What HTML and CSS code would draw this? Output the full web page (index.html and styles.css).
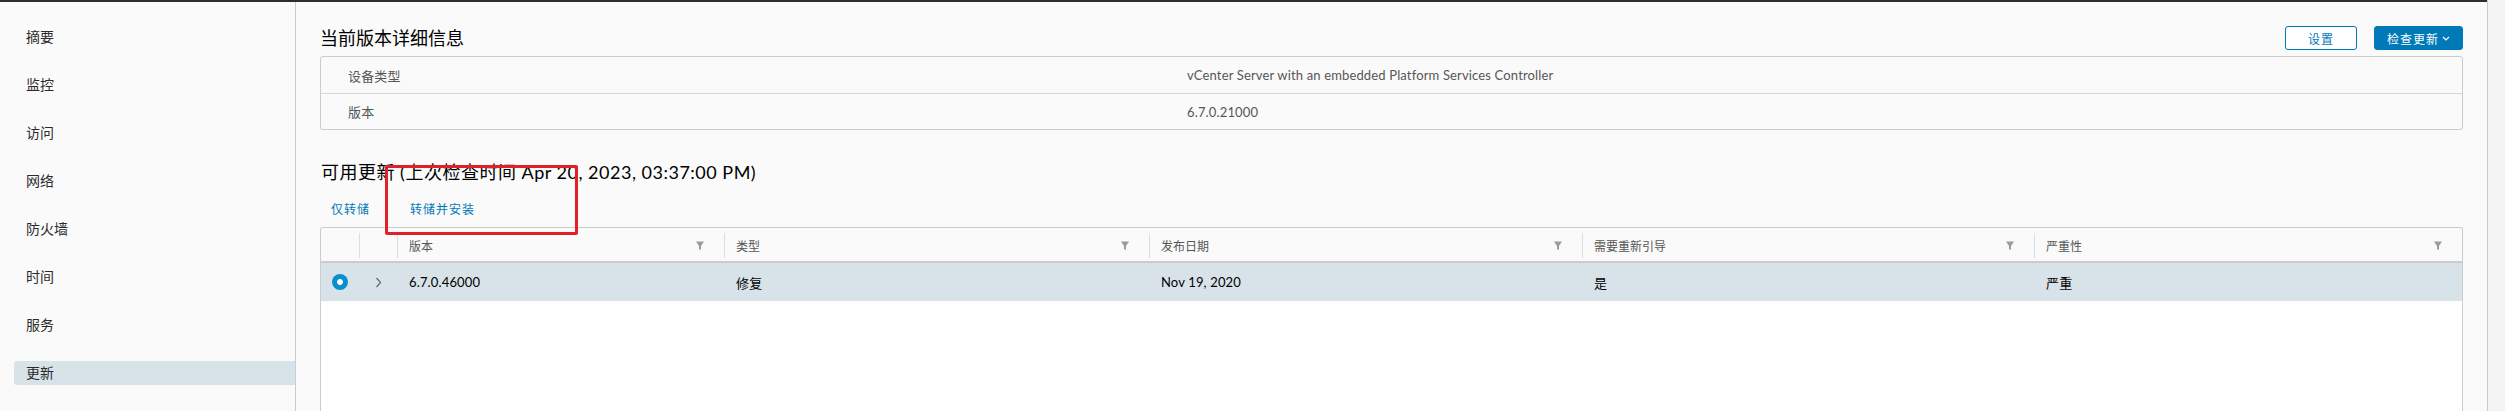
FILE: index.html
```html
<!DOCTYPE html>
<html lang="zh-CN">
<head>
<meta charset="utf-8">
<title>更新</title>
<link rel="stylesheet" href="styles.css">
</head>
<body>
<div class="app">
  <div class="workspace">
    <div class="topbar"></div>
    <div class="layout">
      <nav class="sidebar">
        <div class="nav-item">摘要</div>
        <div class="nav-item">监控</div>
        <div class="nav-item">访问</div>
        <div class="nav-item">网络</div>
        <div class="nav-item">防火墙</div>
        <div class="nav-item">时间</div>
        <div class="nav-item">服务</div>
        <div class="nav-item active">更新</div>
      </nav>
      <main class="main">
        <div class="section-head">
          <h2 class="title">当前版本详细信息</h2>
          <div class="actions">
            <button class="btn btn-outline">设置</button>
            <button class="btn btn-primary">检查更新<svg class="caret" width="8" height="5" viewBox="0 0 8 5"><polyline points="1,1 4,4 7,1" fill="none" stroke="#fff" stroke-width="1.2"/></svg></button>
          </div>
        </div>
        <div class="info-box">
          <div class="info-row">
            <div class="info-label">设备类型</div>
            <div class="info-value">vCenter Server with an embedded Platform Services Controller</div>
          </div>
          <div class="info-row">
            <div class="info-label">版本</div>
            <div class="info-value">6.7.0.21000</div>
          </div>
        </div>
        <h2 class="title title-updates">可用更新 (上次检查时间 Apr 20, 2023, 03:37:00 PM)</h2>
        <div class="link-bar">
          <a class="link">仅转储</a>
          <a class="link">转储并安装</a>
        </div>
        <div class="grid">
          <div class="grid-head">
            <div class="gh-cell"></div>
            <div class="gh-cell"><div class="gh-inner"></div></div>
            <div class="gh-cell"><div class="gh-inner"><span>版本</span><svg class="filter" width="8" height="9" viewBox="0 0 8 9"><path d="M0 0.5H8L5 5V9L3 8V5Z" fill="#9b9b9b"/></svg></div></div>
            <div class="gh-cell"><div class="gh-inner"><span>类型</span><svg class="filter" width="8" height="9" viewBox="0 0 8 9"><path d="M0 0.5H8L5 5V9L3 8V5Z" fill="#9b9b9b"/></svg></div></div>
            <div class="gh-cell"><div class="gh-inner"><span>发布日期</span><svg class="filter" width="8" height="9" viewBox="0 0 8 9"><path d="M0 0.5H8L5 5V9L3 8V5Z" fill="#9b9b9b"/></svg></div></div>
            <div class="gh-cell"><div class="gh-inner"><span>需要重新引导</span><svg class="filter" width="8" height="9" viewBox="0 0 8 9"><path d="M0 0.5H8L5 5V9L3 8V5Z" fill="#9b9b9b"/></svg></div></div>
            <div class="gh-cell"><div class="gh-inner"><span>严重性</span><svg class="filter" width="8" height="9" viewBox="0 0 8 9"><path d="M0 0.5H8L5 5V9L3 8V5Z" fill="#9b9b9b"/></svg></div></div>
          </div>
          <div class="grid-row selected">
            <div class="gr-cell center"><span class="radio"></span></div>
            <div class="gr-cell center"><svg width="7" height="11" viewBox="0 0 7 11"><polyline points="1.5,1 5.5,5.5 1.5,10" fill="none" stroke="#6b6b6b" stroke-width="1.3"/></svg></div>
            <div class="gr-cell">6.7.0.46000</div>
            <div class="gr-cell">修复</div>
            <div class="gr-cell">Nov 19, 2020</div>
            <div class="gr-cell">是</div>
            <div class="gr-cell">严重</div>
          </div>
        </div>
        <div class="annotation"></div>
      </main>
    </div>
  </div>
  <aside class="rightpanel"></aside>
</div>
</body>
</html>
```

FILE: styles.css
```css
* { box-sizing: border-box; }
html, body { margin: 0; height: 100%; }
body {
  font-family: Lato, "Noto Sans CJK SC", sans-serif;
  background: #fafafa;
  color: #333;
  overflow: hidden;
}
.app { display: flex; height: 411px; }
.workspace { flex: 1; min-width: 0; display: flex; flex-direction: column; }
.topbar { flex: none; height: 2px; background: #2e2e2e; }
.layout { flex: 1; min-height: 0; display: flex; }

.sidebar {
  flex: none;
  width: 296px;
  border-right: 1px solid #cccccc;
  background: #fafafa;
  padding-top: 23px;
  display: flex;
  flex-direction: column;
  gap: 24px;
}
.nav-item {
  margin-left: 14px;
  height: 24px;
  line-height: 24px;
  padding-left: 12px;
  font-size: 14px;
  color: #2b2b2b;
  border-radius: 3px 0 0 3px;
}
.nav-item.active { background: #d8e3e9; }

.main {
  flex: 1;
  min-width: 0;
  position: relative;
  padding: 24px 24px 0;
  display: flex;
  flex-direction: column;
  background: #fafafa;
}
.section-head {
  display: flex;
  align-items: center;
  justify-content: space-between;
  height: 24px;
}
.title {
  margin: 0;
  font-size: 18px;
  font-weight: 400;
  color: #000;
  line-height: 24px;
}
.actions { display: flex; gap: 17px; }
.btn {
  height: 24px;
  border-radius: 3px;
  font-family: inherit;
  font-size: 12px;
  letter-spacing: 1px;
  padding: 0;
  display: flex;
  align-items: center;
  justify-content: center;
  cursor: pointer;
}
.btn-outline {
  width: 72px;
  border: 1px solid #0079b8;
  background: #fff;
  color: #0079b8;
}
.btn-primary {
  width: 89px;
  border: 1px solid #0079b8;
  background: #0079b8;
  color: #fff;
  gap: 3px;
}
.caret { display: block; }

.info-box {
  margin-top: 6px;
  border: 1px solid #cccccc;
  border-radius: 3px;
  background: #fafafa;
}
.info-row {
  display: flex;
  height: 36px;
  align-items: center;
  font-size: 13px;
  letter-spacing: 0.15px;
  color: #565656;
}
.info-row + .info-row { border-top: 1px solid #d7d7d7; }
.info-label { width: 866px; padding-left: 27px; }
.info-value { flex: 1; }

.title-updates { margin-top: 30px; padding-left: 1px; letter-spacing: 0.5px; }
.link-bar {
  margin-top: 12px;
  height: 24px;
  display: flex;
  align-items: center;
  gap: 40px;
  padding-left: 11px;
}
.link {
  font-size: 12px;
  letter-spacing: 1px;
  color: #0079b8;
  text-decoration: none;
}

.grid {
  margin-top: 7px;
  flex: 1;
  border: 1px solid #cccccc;
  border-bottom: none;
  border-radius: 3px 3px 0 0;
  background: #fff;
  display: flex;
  flex-direction: column;
}
.grid-head, .grid-row {
  display: grid;
  grid-template-columns: 38px 38px 327px 425px 433px 452px 1fr;
}
.grid-head {
  background: #fafafa;
  border-bottom: 2px solid #cccccc;
  border-radius: 3px 3px 0 0;
  padding: 5px 0 3px;
}
.gh-inner {
  height: 25px;
  border-left: 1px solid #dddddd;
  display: flex;
  align-items: center;
  justify-content: space-between;
  padding: 0 20px 0 11px;
  font-size: 12px;
  color: #565656;
}
.filter { display: block; }
.grid-row {
  height: 38px;
  align-items: center;
  font-size: 13px;
  letter-spacing: 0.15px;
  color: #000;
}
.grid-row.selected { background: #d8e3e9; }
.gr-cell { padding-left: 12px; }
.gr-cell.center { padding-left: 0; display: flex; justify-content: center; align-items: center; }
.radio {
  width: 16px;
  height: 16px;
  border-radius: 50%;
  background: radial-gradient(circle, #ffffff 0 2.6px, #0a90d0 3.2px);
}

.annotation {
  position: absolute;
  left: 89px;
  top: 163px;
  width: 193px;
  height: 70px;
  border: 3px solid #e3202a;
  border-radius: 2px;
  pointer-events: none;
}

.rightpanel {
  flex: none;
  width: 18px;
  border-left: 1px solid #cccccc;
  background: #f4f4f4;
}
```
